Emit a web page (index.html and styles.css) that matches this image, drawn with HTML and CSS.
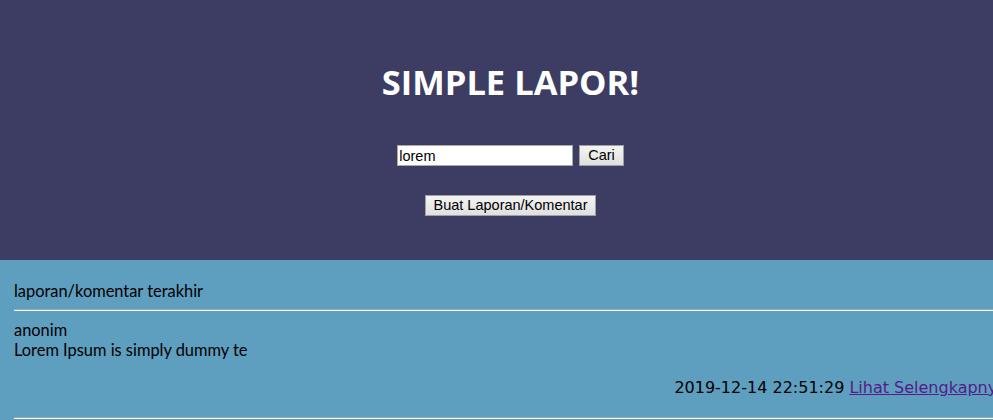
FILE: index.html
```html
<!DOCTYPE html>
<html>
<head>
<meta charset="utf-8">
<link rel="stylesheet" href="styles.css">
</head>
<body>
<header class="hero">
  <h1 class="title">SIMPLE LAPOR!</h1>
  <form class="search">
    <input class="search-input" type="text" value="lorem">
    <button class="btn" type="button">Cari</button>
  </form>
  <button class="btn btn-create" type="button">Buat Laporan/Komentar</button>
</header>
<main class="feed">
  <div class="feed-title">laporan/komentar terakhir</div>
  <hr class="rule">
  <div class="post">
    <div class="post-author">anonim</div>
    <div class="post-body">Lorem Ipsum is simply dummy te</div>
    <div class="post-meta">2019-12-14 22:51:29 <a class="post-link" href="#">Lihat Selengkapnya</a></div>
  </div>
  <hr class="rule">
</main>
</body>
</html>
```
FILE: styles.css
```css
html, body {
  margin: 0;
  padding: 0;
  overflow: hidden;
  background: #5e9ebe;
}
body {
  width: 1021px;
  height: 420px;
}
.hero {
  background: #3d3c63;
  height: 260px;
  box-sizing: border-box;
  padding-top: 59px;
  display: flex;
  flex-direction: column;
  align-items: center;
}
.title {
  margin: 0;
  color: #ffffff;
  font-family: "Open Sans", sans-serif;
  font-weight: 700;
  font-size: 34.5px;
  line-height: 46px;
}
.search {
  margin: 40px 0 0 0;
  display: flex;
  gap: 6px;
  align-items: center;
}
.search-input {
  width: 176px;
  height: 21px;
  box-sizing: border-box;
  border: 1px solid #a9a9a9;
  background: #fff;
  padding: 0 1px;
  margin: 0;
  font-family: "Liberation Sans", Arial, sans-serif;
  font-size: 14.5px;
  color: #000;
  outline: none;
}
.btn {
  height: 21px;
  box-sizing: border-box;
  margin: 0;
  padding: 0 8px;
  border: 1px solid #a0a0a0;
  border-radius: 0;
  background: linear-gradient(#f4f4f4, #e0e0e0);
  font-family: "Liberation Sans", Arial, sans-serif;
  font-size: 14.5px;
  color: #000;
  line-height: 19px;
}
.btn-create {
  margin-top: 29px;
}
.feed {
  padding: 21px 14px 0 14px;
}
.feed-title, .post-author, .post-body {
  font-family: "Lato", sans-serif;
  font-size: 16.4px;
  line-height: 20px;
  color: #000;
}
.rule {
  margin: 8px 0 9px 0;
  border: 0;
  border-top: 1px solid #9aa;
  border-bottom: 1px solid #fff;
  height: 0;
}
.post-meta {
  margin-top: 18px;
  margin-bottom: 19px;
  text-align: right;
  font-family: "DejaVu Sans", sans-serif;
  font-size: 16px;
  line-height: 20px;
  color: #000;
}
.post-link {
  color: #551a8b;
  text-decoration: underline;
}
```
